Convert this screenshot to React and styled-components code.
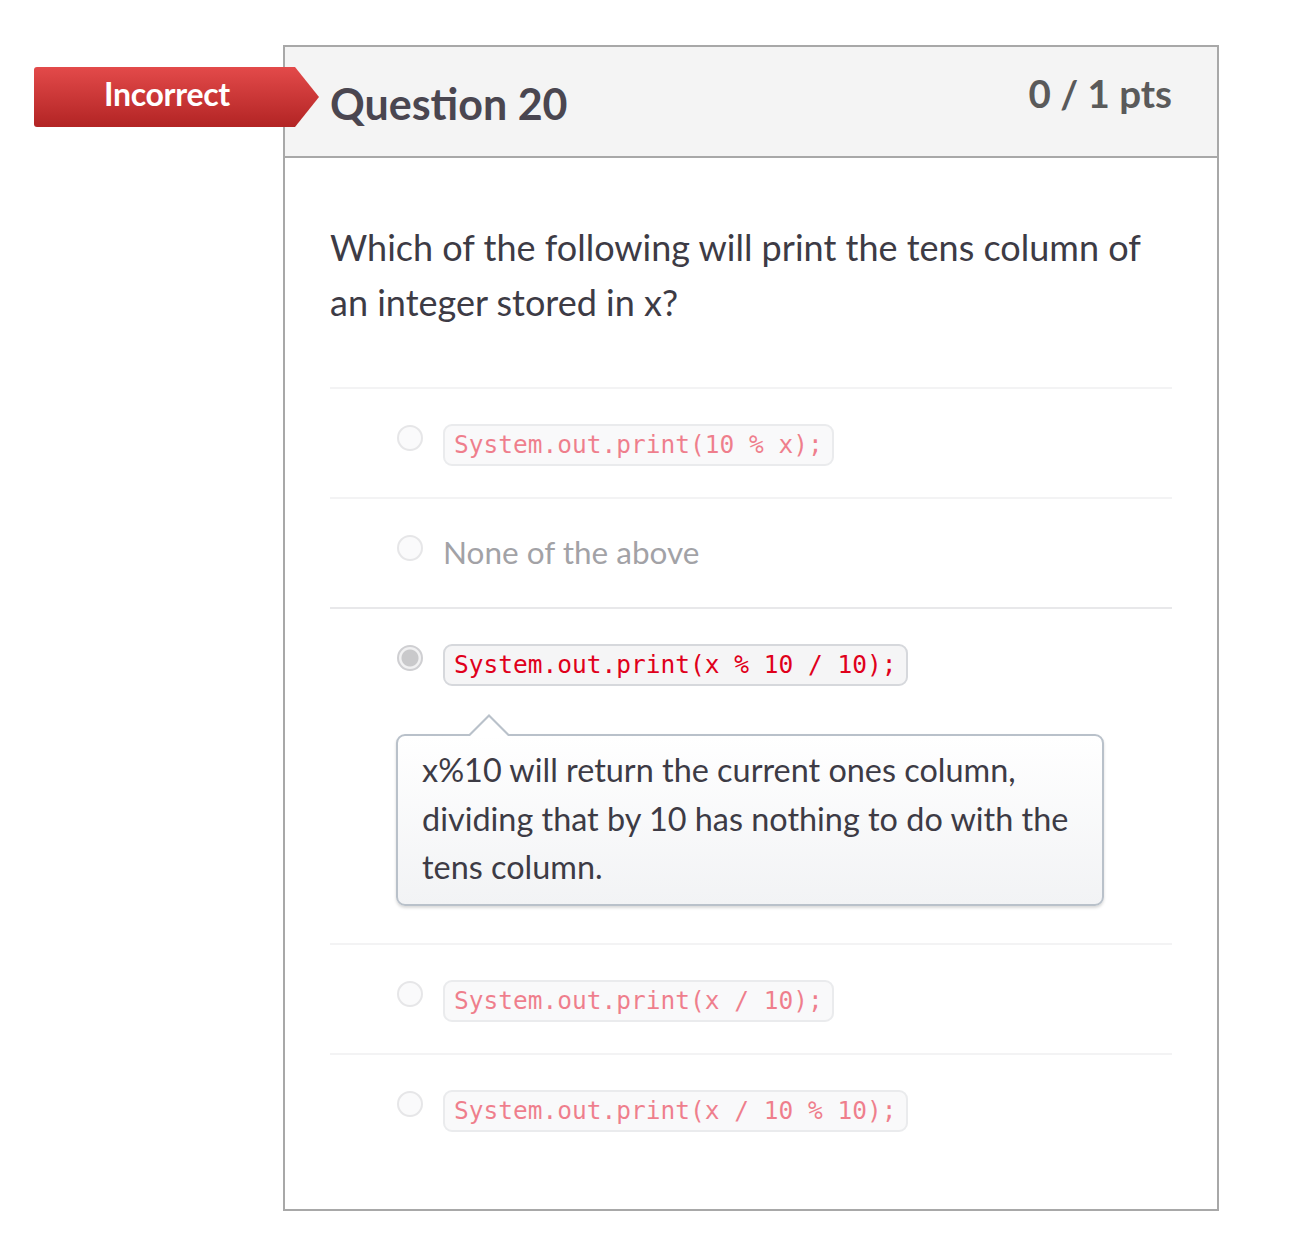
import React from 'react';
import styled, { createGlobalStyle } from 'styled-components';

const GlobalStyle = createGlobalStyle`
  html, body {
    margin: 0;
    padding: 0;
    background: #fff;
    font-family: Lato, "Open Sans", sans-serif;
  }
`;

const Page = styled.div`
  position: relative;
  padding: 45px 0 29px 283px;
`;

const Badge = styled.div`
  position: absolute;
  left: 34px;
  top: 67px;
  width: 285px;
  height: 60px;
  display: flex;
  align-items: center;
  padding: 0 0 7px 70px;
  box-sizing: border-box;
  background: linear-gradient(#e34a4a, #b22424);
  clip-path: polygon(0 0, 261px 0, 285px 30px, 261px 60px, 0 60px);
  border-radius: 3px 0 0 3px;
  color: #fff;
  font-weight: 700;
  font-size: 32px;
  letter-spacing: -0.3px;
  z-index: 2;
`;

const Card = styled.div`
  width: 936px;
  box-sizing: border-box;
  border: 2px solid #a8a8a8;
`;

const Header = styled.div`
  display: flex;
  justify-content: space-between;
  align-items: flex-start;
  height: 111px;
  box-sizing: border-box;
  padding: 0 45px;
  background: #f4f4f4;
  border-bottom: 2px solid #a8a8a8;
`;

const Title = styled.h2`
  margin: 31px 0 0;
  font-size: 43px;
  font-weight: 700;
  color: #4a4650;
  line-height: 1.2;
`;

const Points = styled.div`
  margin-top: 23px;
  font-size: 38.5px;
  font-weight: 700;
  color: #5a5a5a;
  line-height: 1.2;
`;

const Body = styled.div`
  padding: 62px 45px 46px;
`;

const Prompt = styled.p`
  margin: 0 0 57px;
  font-size: 36px;
  line-height: 55px;
  color: #3d3b45;
`;

const Answer = styled.div`
  border-top: 2px solid #e8e8ea;
  padding: 35px 0 29px 67px;
  opacity: ${({ $faded }) => ($faded ? 0.5 : 1)};
`;

const Choice = styled.div`
  display: flex;
  align-items: flex-start;
  gap: 20px;
  min-height: 44px;
`;

const Radio = styled.span`
  flex: none;
  width: 22px;
  height: 22px;
  margin-top: 1px;
  border-radius: 50%;
  border: 2px solid #cfcfd2;
  background: ${({ $checked }) => ($checked ? 'radial-gradient(circle, #c9c9cb 0 8px, #f1f1f2 9px)' : '#f7f7f8')};
`;

const Code = styled.code`
  display: inline-block;
  box-sizing: border-box;
  padding: 0 9px;
  height: 42px;
  line-height: 38px;
  border: 2px solid #d6d8dc;
  border-radius: 9px;
  background: #f5f5f6;
  font-family: "DejaVu Sans Mono", "Liberation Mono", monospace;
  font-size: 24.5px;
  color: #e0001b;
`;

const Plain = styled.span`
  font-size: 31.5px;
  line-height: 36px;
  color: #47474f;
`;

const Comment = styled.div`
  position: relative;
  margin: 46px 0 8px -1px;
  width: 708px;
  box-sizing: border-box;
  padding: 10px 24px 12px;
  border: 2px solid #b9c1ca;
  border-radius: 9px;
  background: linear-gradient(#ffffff, #f2f3f5);
  box-shadow: 0 2px 3px rgba(0, 0, 0, 0.15);
  font-size: 32.4px;
  line-height: 48.5px;
  color: #3d3b45;

  &::before, &::after {
    content: '';
    position: absolute;
    left: 70px;
    width: 0;
    height: 0;
    border-left: 21px solid transparent;
    border-right: 21px solid transparent;
  }
  &::before {
    top: -22px;
    border-bottom: 21px solid #b9c1ca;
  }
  &::after {
    top: -19px;
    border-bottom: 21px solid #fff;
  }
`;

const answers = [
  { code: 'System.out.print(10 % x);' },
  { text: 'None of the above' },
  {
    code: 'System.out.print(x % 10 / 10);',
    checked: true,
    comment: 'x%10 will return the current ones column, dividing that by 10 has nothing to do with the tens column.',
  },
  { code: 'System.out.print(x / 10);' },
  { code: 'System.out.print(x / 10 % 10);' },
];

export default function App() {
  return (
    <Page>
      <GlobalStyle />
      <Badge>Incorrect</Badge>
      <Card>
        <Header>
          <Title>Question 20</Title>
          <Points>0 / 1 pts</Points>
        </Header>
        <Body>
          <Prompt>Which of the following will print the tens column of an integer stored in x?</Prompt>
          {answers.map((a, i) => (
            <Answer key={i} $faded={!a.checked}>
              <Choice>
                <Radio $checked={a.checked} />
                {a.code ? <Code>{a.code}</Code> : <Plain>{a.text}</Plain>}
              </Choice>
              {a.comment && <Comment>{a.comment}</Comment>}
            </Answer>
          ))}
        </Body>
      </Card>
    </Page>
  );
}
